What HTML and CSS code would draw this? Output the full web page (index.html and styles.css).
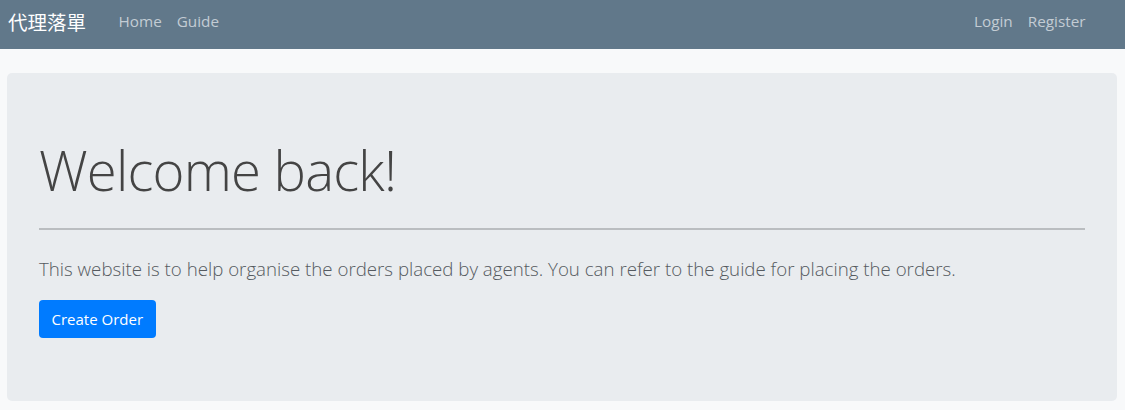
FILE: index.html
```html
<!DOCTYPE html>
<html lang="en">
<head>
<meta charset="utf-8">
<title>代理落單</title>
<link rel="stylesheet" href="styles.css">
</head>
<body>
<nav class="navbar">
  <a class="brand" href="#">代理落單</a>
  <ul class="nav nav-left">
    <li><a class="nav-link" href="#">Home</a></li>
    <li><a class="nav-link" href="#">Guide</a></li>
  </ul>
  <ul class="nav nav-right">
    <li><a class="nav-link" href="#">Login</a></li>
    <li><a class="nav-link" href="#">Register</a></li>
  </ul>
</nav>
<main class="page">
  <section class="jumbotron">
    <h1 class="display">Welcome back!</h1>
    <hr class="divider">
    <p class="lead">This website is to help organise the orders placed by agents. You can refer to the guide for placing the orders.</p>
    <div class="actions">
      <a class="btn btn-primary" href="#">Create Order</a>
    </div>
  </section>
</main>
</body>
</html>
```
FILE: styles.css
```css
* { box-sizing: border-box; }
html, body { margin: 0; padding: 0; }
body {
  background: #f8f9fa;
  font-family: "Open Sans", "Noto Sans", "Noto Sans CJK TC", sans-serif;
  font-size: 16px;
  color: #212529;
  width: 1125px;
  height: 410px;
  overflow: hidden;
}
a { text-decoration: none; }

.navbar {
  height: 49px;
  background: #61788a;
  display: flex;
  align-items: center;
  padding: 0 8px;
}
.brand {
  color: #fff;
  font-family: "Noto Sans CJK TC", sans-serif;
  font-size: 19.5px;
  margin-right: 25px;
  line-height: 1;
  margin-top: -5px;
}
.nav {
  list-style: none;
  margin: 0;
  padding: 0;
  display: flex;
  gap: 0;
  margin-top: -7px;
}
.nav-right { margin-left: auto; margin-right: 24px; }
.nav-link {
  display: block;
  color: #c3ccd4;
  padding: 0 7.5px;
  font-size: 15.3px;
}

.page {
  padding: 24px 8px 0 7px;
}
.jumbotron {
  background: #e9ecef;
  border-radius: 5px;
  padding: 64px 32px 63px;
}
.display {
  margin: 0;
  font-size: 54.5px;
  font-weight: 300;
  line-height: 67px;
  color: #444;
  letter-spacing: -0.8px;
}
.divider {
  margin: 24px 0;
  border: 0;
  border-top: 2px solid #babdc0;
}
.lead {
  margin: 0 0 16px;
  font-size: 18.7px;
  font-weight: 300;
  line-height: 30px;
  color: #555a60;
}
.actions { display: flex; }
.btn {
  display: inline-block;
  font-size: 15px;
  line-height: 24px;
  padding: 7px 12.5px;
  border-radius: 4px;
}
.btn-primary {
  background: #007bff;
  color: #fff;
}
```
